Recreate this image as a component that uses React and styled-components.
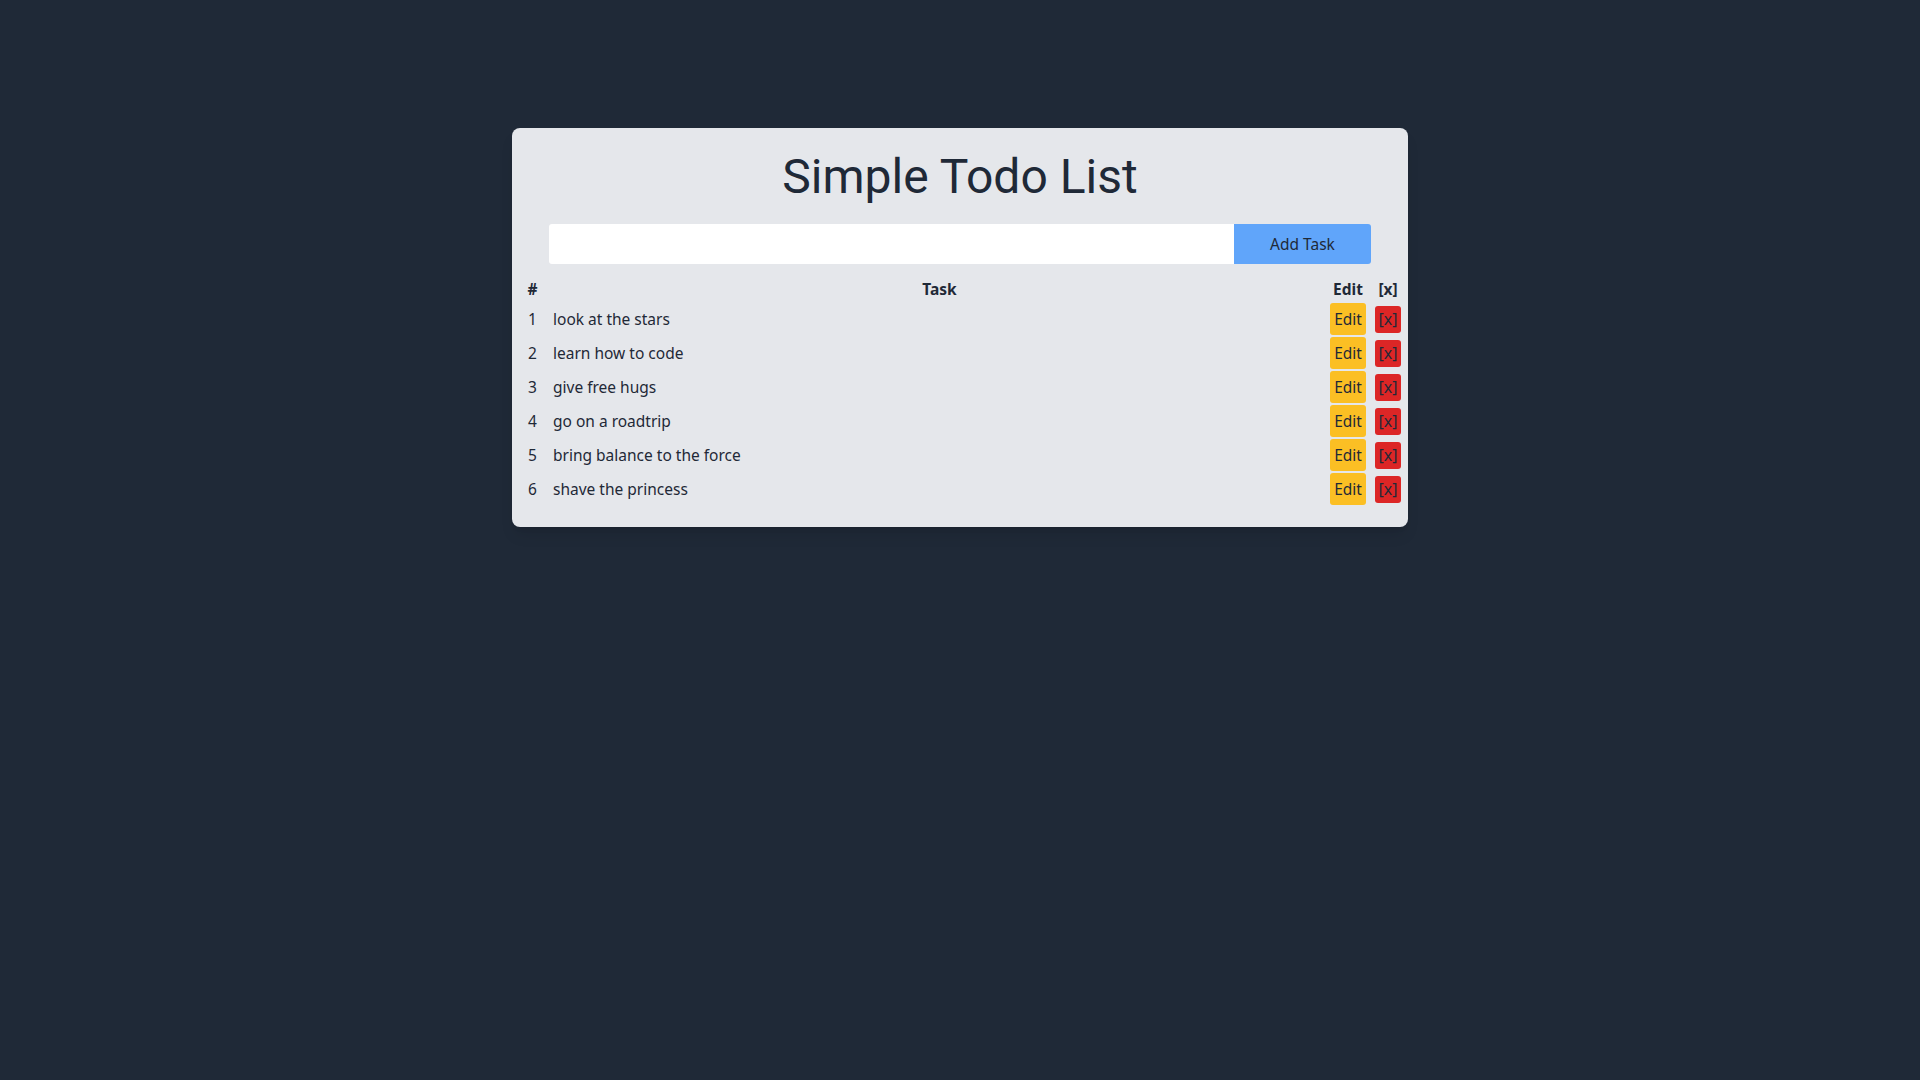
import React, { useState } from "react";
import styled, { createGlobalStyle } from "styled-components";

const GlobalStyle = createGlobalStyle`
  html, body {
    margin: 0;
    padding: 0;
    background: #1f2937;
    min-height: 100%;
  }
  body {
    font-family: "Noto Sans", "Open Sans", sans-serif;
    color: #1f2937;
  }
  * {
    box-sizing: border-box;
  }
`

const Page = styled.div`
  width: 100%;
  min-height: 1080px;
  background: #1f2937;
  padding-top: 128px;
`

const Card = styled.div`
  width: 896px;
  margin: 0 auto;
  background: #e5e7eb;
  border-radius: 8px;
  padding: 25px 0 21px;
  box-shadow: 0 10px 15px -3px rgba(0, 0, 0, 0.1), 0 4px 6px -4px rgba(0, 0, 0, 0.1);
`

const Title = styled.h1`
  margin: 0 0 23px;
  font-family: Roboto, "Noto Sans", sans-serif;
  font-weight: 400;
  font-size: 48px;
  line-height: 48px;
  text-align: center;
  color: #1f2937;
`

const Form = styled.form`
  display: flex;
  width: 822px;
  height: 40px;
  margin: 0 auto 12px;
`

const TaskInput = styled.input`
  flex: 1;
  border: none;
  outline: none;
  background: #ffffff;
  border-radius: 3px 0 0 3px;
  padding: 0 12px;
  font-family: inherit;
  font-size: 15.5px;
  color: #1f2937;
`

const AddButton = styled.button`
  width: 137px;
  border: none;
  background: #60a5fa;
  border-radius: 0 3px 3px 0;
  font-family: inherit;
  font-size: 15.5px;
  color: #1f2937;
  cursor: pointer;
`

const Table = styled.div`
  padding: 0 2px 0 8px;
`

const Row = styled.div`
  display: grid;
  grid-template-columns: 25px 1fr 44px 36px;
  align-items: center;
  height: ${(p) => (p.$head ? "26px" : "34px")};
  font-size: 15.5px;
  line-height: 24px;
  font-weight: ${(p) => (p.$head ? 700 : 400)};
`

const Num = styled.div`
  text-align: center;
`

const TaskCell = styled.div`
  padding-left: 8px;
  text-align: ${(p) => (p.$head ? "center" : "left")};
`

const Cell = styled.div`
  display: flex;
  justify-content: center;
  align-items: center;
`

const EditButton = styled.button`
  width: 36px;
  height: 32px;
  padding: 0;
  border: none;
  border-radius: 3px;
  background: #fbbf24;
  font-family: inherit;
  font-size: 15.5px;
  line-height: 24px;
  color: #1f2937;
  cursor: pointer;
`

const DeleteButton = styled.button`
  width: 26px;
  height: 27px;
  padding: 0;
  border: none;
  border-radius: 3px;
  background: #dc2626;
  font-family: inherit;
  font-size: 16px;
  line-height: 20px;
  color: #1f2937;
  cursor: pointer;
`

const initialTasks = [
  "look at the stars",
  "learn how to code",
  "give free hugs",
  "go on a roadtrip",
  "bring balance to the force",
  "shave the princess",
]

export default function App() {
  const [tasks, setTasks] = useState(initialTasks)
  const [text, setText] = useState("")

  const handleAdd = (e) => {
    e.preventDefault()
    if (text.trim() === "") return
    setTasks([...tasks, text])
    setText("")
  }

  const handleDelete = (index) => {
    setTasks(tasks.filter((_, i) => i !== index))
  }

  return (
    <Page>
      <GlobalStyle />
      <Card>
        <Title>Simple Todo List</Title>
        <Form onSubmit={handleAdd}>
          <TaskInput value={text} onChange={(e) => setText(e.target.value)} />
          <AddButton type="submit">Add Task</AddButton>
        </Form>
        <Table>
          <Row $head>
            <Num>#</Num>
            <TaskCell $head>Task</TaskCell>
            <Cell>Edit</Cell>
            <Cell>[x]</Cell>
          </Row>
          {tasks.map((task, i) => (
            <Row key={i}>
              <Num>{i + 1}</Num>
              <TaskCell>{task}</TaskCell>
              <Cell>
                <EditButton>Edit</EditButton>
              </Cell>
              <Cell>
                <DeleteButton onClick={() => handleDelete(i)}>[x]</DeleteButton>
              </Cell>
            </Row>
          ))}
        </Table>
      </Card>
    </Page>
  )
}
